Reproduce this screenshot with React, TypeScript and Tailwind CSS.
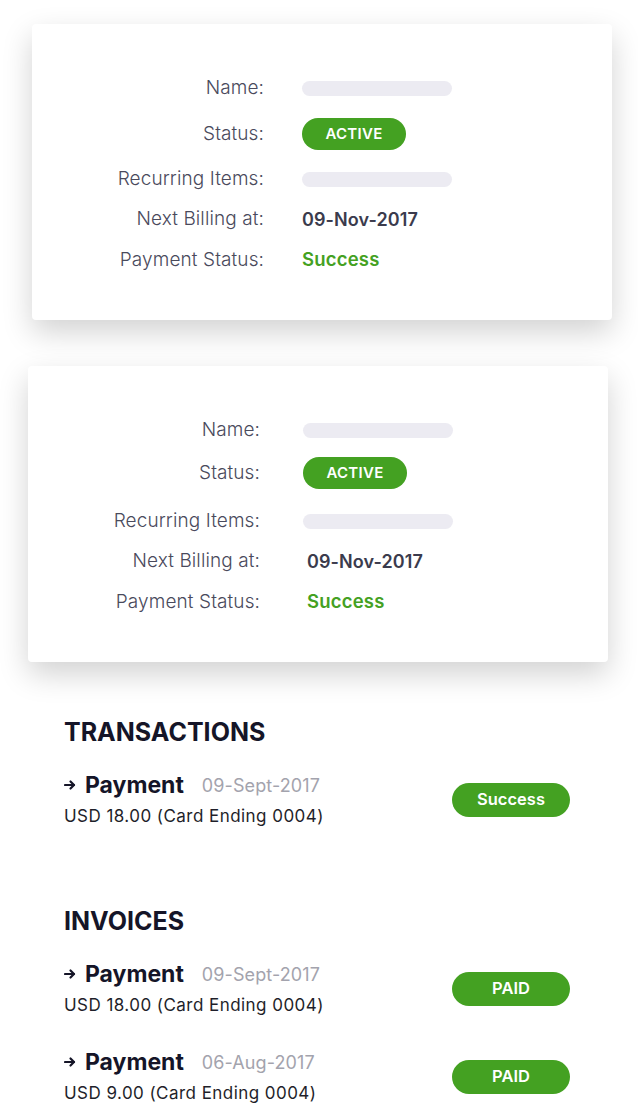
import React from "react";

const font = { fontFamily: "Inter, 'Noto Sans', sans-serif" };

function Bar() {
  return <div className="h-[15px] w-[150px] rounded-full bg-[#ecebf2]" />;
}

function Row({ label, children, className, valueClass }: { label: string; children: React.ReactNode; className?: string; valueClass: string }) {
  return (
    <div className={"flex h-[32px] items-center " + (className ?? "")}>
      <div className="w-[232px] text-right text-[19px] font-light text-[#4a4a5c] tracking-[0.1px]">{label}</div>
      <div className={"flex items-center " + valueClass}>{children}</div>
    </div>
  );
}

function Card({ className, barGap, textGap, dy }: { className?: string; barGap: string; textGap: string; dy?: boolean }) {
  return (
    <div className={"w-[580px] h-[296px] rounded-[4px] bg-white pt-[48px] shadow-[0_12px_30px_rgba(0,0,0,0.18)] " + (className ?? "")}>
      <Row label="Name:" valueClass={barGap}><Bar /></Row>
      <Row label="Status:" className={dy ? "mt-[11px]" : "mt-[14px]"} valueClass={barGap}>
        <div className="flex h-[32px] w-[104px] items-center justify-center rounded-full bg-[#44a122] text-[15px] font-semibold text-white tracking-[0.3px]">ACTIVE</div>
      </Row>
      <Row label="Recurring Items:" className={dy ? "mt-[16px]" : "mt-[13px]"} valueClass={barGap}><Bar /></Row>
      <Row label="Next Billing at:" className="mt-[8px]" valueClass={textGap}>
        <span className="text-[18px] font-semibold text-[#3b3b4d] tracking-[0.1px]">09-Nov-2017</span>
      </Row>
      <Row label="Payment Status:" className="mt-[9px]" valueClass={textGap}>
        <span className="text-[18.5px] font-semibold text-[#44a122] tracking-[0.2px]">Success</span>
      </Row>
    </div>
  );
}

function Arrow() {
  return (
    <svg width="12" height="12" viewBox="0 0 12 12" className="mr-[9px]">
      <path d="M1 6h9" stroke="#151528" strokeWidth="2.2" strokeLinecap="round" />
      <path d="M6.5 2.5L10 6L6.5 9.5" stroke="#151528" strokeWidth="2.2" fill="none" strokeLinecap="round" strokeLinejoin="round" />
    </svg>
  );
}

function Item({ date, amount, badge, className }: { date: string; amount: string; badge: string; className?: string }) {
  return (
    <div className={"flex items-center justify-between pr-[68px] " + (className ?? "")}>
      <div className="flex flex-col">
        <div className="flex h-[28px] items-center">
          <Arrow />
          <span className="text-[23px] font-bold text-[#151528] tracking-[0px]">Payment</span>
          <span className="ml-[18px] text-[18px] text-[#a3a3ad] tracking-[0.1px]">{date}</span>
        </div>
        <div className="mt-[5px] h-[24px] leading-[24px] text-[17px] text-[#1f1f2a] tracking-[0.45px]">{amount}</div>
      </div>
      <div className="flex h-[34px] w-[118px] items-center justify-center rounded-full bg-[#44a122] text-[16.5px] font-semibold text-white">{badge}</div>
    </div>
  );
}

export default function App() {
  return (
    <div className="min-h-[1104px] w-[638px] bg-white pb-[10px]" style={font}>
      <div className="pt-[24px]">
        <Card className="ml-[32px]" barGap="ml-[38px]" textGap="ml-[38px]" />
        <Card className="ml-[28px] mt-[46px]" barGap="ml-[43px]" textGap="ml-[47px]" dy />
      </div>
      <div className="pl-[64px]">
        <h2 className="mt-[54px] h-[32px] leading-[32px] text-[25px] font-bold text-[#151528] tracking-[0px]">TRANSACTIONS</h2>
        <Item className="mt-[23px]" date="09-Sept-2017" amount="USD 18.00 (Card Ending 0004)" badge="Success" />
        <h2 className="mt-[77px] h-[32px] leading-[32px] text-[25px] font-bold text-[#151528] tracking-[0px]">INVOICES</h2>
        <Item className="mt-[23px]" date="09-Sept-2017" amount="USD 18.00 (Card Ending 0004)" badge="PAID" />
        <Item className="mt-[31px]" date="06-Aug-2017" amount="USD 9.00 (Card Ending 0004)" badge="PAID" />
      </div>
    </div>
  );
}
